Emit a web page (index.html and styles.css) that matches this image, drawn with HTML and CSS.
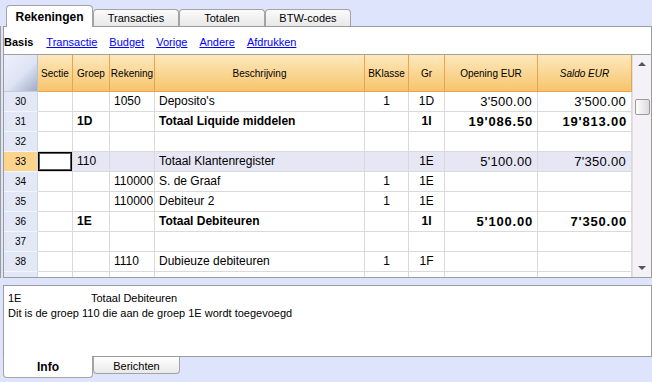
FILE: index.html
```html
<!DOCTYPE html>
<html lang="nl">
<head>
    <meta charset="UTF-8">
    <title>Rekeningen</title>
    <link rel="stylesheet" href="styles.css">
</head>
<body>
    <div class="tabs">
        <div class="tab active">Rekeningen</div>
        <div class="tab">Transacties</div>
        <div class="tab">Totalen</div>
        <div class="tab">BTW-codes</div>
    </div>

    <div class="panel">
        <div class="toolbar">
            <b>Basis</b>
            <a href="#">Transactie</a>
            <a href="#">Budget</a>
            <a href="#">Vorige</a>
            <a href="#">Andere</a>
            <a href="#">Afdrukken</a>
        </div>

        <div class="grid">
            <div class="table">
                <div class="row head">
                    <div class="cell corner"></div>
                    <div class="cell">Sectie</div>
                    <div class="cell">Groep</div>
                    <div class="cell">Rekening</div>
                    <div class="cell">Beschrijving</div>
                    <div class="cell">BKlasse</div>
                    <div class="cell">Gr</div>
                    <div class="cell">Opening EUR</div>
                    <div class="cell"><i>Saldo EUR</i></div>
                </div>
                <div class="row">
                    <div class="cell num">30</div>
                    <div class="cell"></div>
                    <div class="cell"></div>
                    <div class="cell">1050</div>
                    <div class="cell">Deposito's</div>
                    <div class="cell c">1</div>
                    <div class="cell c">1D</div>
                    <div class="cell r">3'500.00</div>
                    <div class="cell r">3'500.00</div>
                </div>
                <div class="row bold">
                    <div class="cell num">31</div>
                    <div class="cell"></div>
                    <div class="cell">1D</div>
                    <div class="cell"></div>
                    <div class="cell">Totaal Liquide middelen</div>
                    <div class="cell c"></div>
                    <div class="cell c">1I</div>
                    <div class="cell r">19'086.50</div>
                    <div class="cell r">19'813.00</div>
                </div>
                <div class="row">
                    <div class="cell num">32</div>
                    <div class="cell"></div>
                    <div class="cell"></div>
                    <div class="cell"></div>
                    <div class="cell"></div>
                    <div class="cell"></div>
                    <div class="cell"></div>
                    <div class="cell"></div>
                    <div class="cell"></div>
                </div>
                <div class="row selected">
                    <div class="cell num">33</div>
                    <div class="cell current"></div>
                    <div class="cell">110</div>
                    <div class="cell"></div>
                    <div class="cell">Totaal Klantenregister</div>
                    <div class="cell c"></div>
                    <div class="cell c">1E</div>
                    <div class="cell r">5'100.00</div>
                    <div class="cell r">7'350.00</div>
                </div>
                <div class="row">
                    <div class="cell num">34</div>
                    <div class="cell"></div>
                    <div class="cell"></div>
                    <div class="cell">110000</div>
                    <div class="cell">S. de Graaf</div>
                    <div class="cell c">1</div>
                    <div class="cell c">1E</div>
                    <div class="cell r"></div>
                    <div class="cell r"></div>
                </div>
                <div class="row">
                    <div class="cell num">35</div>
                    <div class="cell"></div>
                    <div class="cell"></div>
                    <div class="cell">110000</div>
                    <div class="cell">Debiteur 2</div>
                    <div class="cell c">1</div>
                    <div class="cell c">1E</div>
                    <div class="cell r"></div>
                    <div class="cell r"></div>
                </div>
                <div class="row bold">
                    <div class="cell num">36</div>
                    <div class="cell"></div>
                    <div class="cell">1E</div>
                    <div class="cell"></div>
                    <div class="cell">Totaal Debiteuren</div>
                    <div class="cell c"></div>
                    <div class="cell c">1I</div>
                    <div class="cell r">5'100.00</div>
                    <div class="cell r">7'350.00</div>
                </div>
                <div class="row">
                    <div class="cell num">37</div>
                    <div class="cell"></div>
                    <div class="cell"></div>
                    <div class="cell"></div>
                    <div class="cell"></div>
                    <div class="cell"></div>
                    <div class="cell"></div>
                    <div class="cell"></div>
                    <div class="cell"></div>
                </div>
                <div class="row">
                    <div class="cell num">38</div>
                    <div class="cell"></div>
                    <div class="cell"></div>
                    <div class="cell">1110</div>
                    <div class="cell">Dubieuze debiteuren</div>
                    <div class="cell c">1</div>
                    <div class="cell c">1F</div>
                    <div class="cell r"></div>
                    <div class="cell r"></div>
                </div>
                <div class="row">
                    <div class="cell num"></div>
                    <div class="cell"></div>
                    <div class="cell"></div>
                    <div class="cell"></div>
                    <div class="cell"></div>
                    <div class="cell"></div>
                    <div class="cell"></div>
                    <div class="cell"></div>
                    <div class="cell"></div>
                </div>
            </div>

            <div class="scroll">
                <div class="arrow up"></div>
                <div class="thumb"></div>
                <div class="arrow down"></div>
            </div>
        </div>
    </div>

    <div class="info">
        <div><span class="info-key">1E</span>Totaal Debiteuren</div>
        <div>Dit is de groep 110 die aan de groep 1E wordt toegevoegd</div>
    </div>

    <div class="bottom-tabs">
        <div class="btab active">Info</div>
        <div class="btab">Berichten</div>
    </div>
</body>
</html>
```

FILE: styles.css
```css
body {
    margin: 0;
    width: 652px;
    height: 382px;
    overflow: hidden;
    background-color: #dfe4fd;
    font-family: "Liberation Sans", Arial, sans-serif;
    color: #000;
}

/* top tabs */
.tabs {
    display: flex;
    align-items: flex-end;
    height: 26px;
    padding-left: 6px;
    position: relative;
    z-index: 1;
}
.tab {
    width: 86px;
    height: 17px;
    box-sizing: border-box;
    border: 1px solid #a3a3a3;
    border-bottom: none;
    border-radius: 4px 4px 0 0;
    background: linear-gradient(#fbfbfb, #e8e8e8);
    font-size: 11px;
    line-height: 17px;
    text-align: center;
}
.tab.active {
    width: 87px;
    height: 22px;
    margin-bottom: -1px;
    background: #fff;
    font-size: 12px;
    font-weight: bold;
    line-height: 22px;
}

/* main panel */
.panel {
    margin-left: 3px;
    width: 649px;
    height: 252px;
    box-sizing: border-box;
    border: 1px solid #9c9c9c;
    background-color: #fff;
    box-shadow: -2px 0 0 #dfe4fd, -3px 0 0 #9c9c9c;
}
.toolbar {
    display: flex;
    align-items: center;
    gap: 12px;
    height: 28px;
    box-sizing: border-box;
    padding-top: 3px;
    border-bottom: 1px solid #a0a0a0;
    font-size: 11px;
}
.toolbar b {
    margin-right: 1px;
}
.toolbar a {
    color: #0000ff;
}

/* grid */
.grid {
    display: flex;
    height: 222px;
    overflow: hidden;
}
.table {
    width: 628px;
}
.row {
    display: grid;
    grid-template-columns: 34px 35px 37px 45px 210px 44px 36px 93px 94px;
    height: 20px;
}
.cell {
    box-sizing: border-box;
    border-right: 1px solid #dadada;
    border-bottom: 1px solid #dadada;
    padding: 0 4px;
    font-size: 12px;
    line-height: 19px;
    white-space: nowrap;
    overflow: hidden;
}
.cell.c {
    text-align: center;
}
.cell.r {
    text-align: right;
    font-size: 13px;
    letter-spacing: 0.3px;
    padding-right: 5px;
}
.cell.num {
    background-color: #e2e8f5;
    border-right-color: #cdd5e5;
    border-bottom-color: #f2f5fb;
    font-size: 10px;
    text-align: center;
}
.row.bold .cell {
    font-weight: bold;
}
.row.bold .cell.r {
    letter-spacing: 0.8px;
    padding-right: 4px;
}
.row.bold .cell.num {
    font-weight: normal;
}
.row.selected .cell {
    background-color: #e6e6f5;
}
.row.selected .cell.num {
    background-color: #fcd48c;
}
.row.selected .cell.current {
    background-color: #fff;
    box-shadow: inset 0 0 0 1px #000, inset 0 0 0 2px #555;
}

.row.head {
    height: 37px;
}
.row.head .cell {
    background: linear-gradient(#fde8bd, #f7c56c);
    border-right-color: #eea24c;
    border-bottom-color: #eea24c;
    font-size: 10px;
    line-height: 38px;
    text-align: center;
    padding: 0;
}
.row.head .cell.corner {
    background: linear-gradient(135deg, #eef0fa 0%, #dfe4f5 55%, #9eacc7 100%);
    border-right-color: #b8c0d4;
    border-bottom-color: #c4cbdc;
}

/* scrollbar */
.scroll {
    width: 19px;
    box-sizing: border-box;
    border-left: 1px solid #e2e0e6;
    background-color: #f4f2f6;
    display: flex;
    flex-direction: column;
    align-items: center;
}
.arrow {
    width: 0;
    height: 0;
    border-left: 4px solid transparent;
    border-right: 4px solid transparent;
}
.arrow.up {
    margin-top: 7px;
    border-bottom: 4px solid #555;
}
.arrow.down {
    margin-top: 151px;
    border-top: 4px solid #555;
}
.thumb {
    width: 15px;
    height: 16px;
    margin-top: 33px;
    box-sizing: border-box;
    border: 1px solid #9a9a9a;
    border-radius: 2px;
    background: linear-gradient(90deg, #fdfdfd, #dcdcdc);
}

/* info panel */
.info {
    margin: 7px 0 0 3px;
    width: 649px;
    height: 72px;
    box-sizing: border-box;
    border: 1px solid #9c9c9c;
    background-color: #fff;
    padding: 5px 4px;
    font-size: 11px;
    line-height: 15px;
}
.info-key {
    display: inline-block;
    width: 83px;
}

.bottom-tabs {
    display: flex;
    margin-left: 3px;
}
.btab {
    width: 87px;
    height: 17px;
    box-sizing: border-box;
    border: 1px solid #a3a3a3;
    border-top: none;
    border-radius: 0 0 4px 4px;
    background: linear-gradient(#ffffff, #e9e9e9);
    font-size: 11px;
    line-height: 18px;
    text-align: center;
}
.btab.active {
    width: 90px;
    height: 22px;
    margin-top: -1px;
    background: #fff;
    font-size: 12px;
    font-weight: bold;
    line-height: 22px;
}
```
